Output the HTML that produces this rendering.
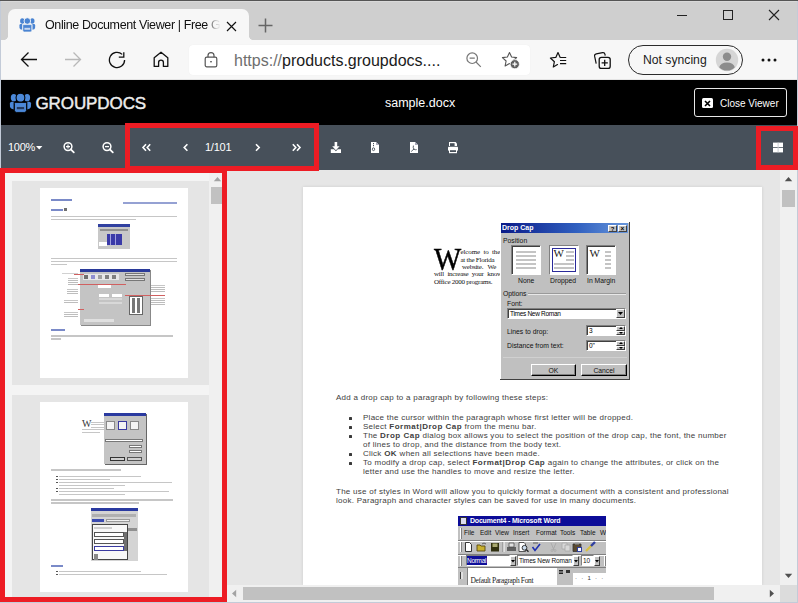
<!DOCTYPE html>
<html><head><meta charset="utf-8">
<style>
*{margin:0;padding:0;box-sizing:border-box}
html,body{width:798px;height:603px;overflow:hidden;background:#fff;font-family:"Liberation Sans",sans-serif}
.a{position:absolute}
#tabs{left:0;top:0;width:798px;height:40px;background:#cfcfcf}
#addr{left:0;top:40px;width:798px;height:40px;background:#f7f7f7}
#hdr{left:0;top:80px;width:798px;height:45px;background:#000}
#tb{left:0;top:125px;width:798px;height:45px;background:#47505a}
#content{left:0;top:170px;width:798px;height:433px;background:#e6e6e6}
#thumbs{left:0;top:170px;width:227px;height:433px;background:#f4f4f4}
.rb{position:absolute;border:5px solid #ed1c24}

.ser{font-family:"Liberation Serif",serif;font-size:7px;line-height:8px;color:#111;white-space:nowrap;letter-spacing:-0.25px}
.dlg{font-size:6.8px;line-height:9px;color:#111;white-space:nowrap}
.opt{width:30px;height:30px;background:#fff;border:1px solid;border-color:#808080 #fff #fff #808080;box-shadow:inset 1px 1px 0 #404040}
.ln{position:absolute;height:2px;background:#c4c4c4}
.inp{background:#fff;border:1px solid;border-color:#808080 #fff #fff #808080;box-shadow:inset 1px 1px 0 #404040}
.btn3{background:#c0c0c0;border:1px solid;border-color:#fff #404040 #404040 #fff}
.t{font-size:8px;line-height:9px;color:#404040;white-space:nowrap;letter-spacing:0.26px}
.t b{letter-spacing:0.5px}
.bul{width:3px;height:3px;background:#3a3a3a;border-radius:0.5px}

.tl{position:absolute}
.tl.b{background:#7a8ac8}
.tl.g{height:1.5px;background:#c6c6c6}
</style></head><body>
<div id="tabs" class="a"></div>
<div id="addr" class="a"></div>

<!-- window borders -->
<div class="a" style="left:0;top:0;width:798px;height:1px;background:#555"></div>
<div class="a" style="left:0;top:1px;width:798px;height:1px;background:#d9d9d9"></div>
<!-- active tab -->
<div class="a" style="left:8px;top:9px;width:241px;height:31px;background:#f7f7f7;border-radius:7px 7px 0 0"></div>
<div class="a" style="left:4px;top:36px;width:4px;height:4px;background:radial-gradient(circle at 0 0,#cfcfcf 3.6px,#f7f7f7 4.2px)"></div>
<div class="a" style="left:249px;top:36px;width:4px;height:4px;background:radial-gradient(circle at 100% 0,#cfcfcf 3.6px,#f7f7f7 4.2px)"></div>
<svg class="a" style="left:18px;top:16px" width="18" height="18" viewBox="0 0 18 18">
 <g fill="#4a84d2">
  <ellipse cx="4.3" cy="5" rx="2.2" ry="2.7"/>
  <ellipse cx="14.3" cy="5" rx="2.2" ry="2.7"/>
  <circle cx="9.3" cy="5" r="3.3" stroke="#f7f7f7" stroke-width="0.9"/>
  <path d="M1.4 9.4Q1.4 8 2.8 8L4.2 8L4.2 13.8Q1.8 13.4 1.5 12Z"/>
  <path d="M17.2 9.4Q17.2 8 15.8 8L14.4 8L14.4 13.8Q16.8 13.4 17.1 12Z"/>
  <path d="M4.8 9.2Q4.8 8.6 5.6 8.6L13 8.6Q13.8 8.6 13.8 9.2L13.8 14.4Q13.8 16 12.2 16L6.4 16Q4.8 16 4.8 14.4Z" stroke="#f7f7f7" stroke-width="0.7"/>
 </g>
 <rect x="6.4" y="11.8" width="5.8" height="2" fill="#c8d8f0"/>
</svg>
<div class="a" style="left:45px;top:16px;width:178px;height:18px;overflow:hidden;white-space:nowrap;font-size:12.5px;letter-spacing:-0.38px;line-height:18px;color:#111;-webkit-mask-image:linear-gradient(90deg,#000 162px,rgba(0,0,0,.25) 170px,transparent 176px)">Online Document Viewer | Free GroupDocs</div>
<svg class="a" style="left:226px;top:20.5px" width="11" height="11" viewBox="0 0 11 11"><path d="M1 1L10 10M10 1L1 10" stroke="#111" stroke-width="1.15"/></svg>
<svg class="a" style="left:258px;top:18px" width="15" height="15" viewBox="0 0 15 15"><path d="M7.5 0.5V14.5M0.5 7.5H14.5" stroke="#666" stroke-width="1.5"/></svg>
<!-- window controls -->
<div class="a" style="left:677px;top:15px;width:10px;height:1px;background:#222"></div>
<div class="a" style="left:723px;top:10px;width:10px;height:10px;border:1px solid #222"></div>
<svg class="a" style="left:768px;top:9px" width="12" height="12" viewBox="0 0 12 12"><path d="M1 1L11 11M11 1L1 11" stroke="#222" stroke-width="1.1"/></svg>
<!-- address row -->
<svg class="a" style="left:20px;top:51px" width="18" height="17" viewBox="0 0 18 17"><path d="M17 8.5H2M8.5 1.5L1.5 8.5L8.5 15.5" stroke="#111" stroke-width="1.3" fill="none"/></svg>
<svg class="a" style="left:64px;top:51px" width="18" height="17" viewBox="0 0 18 17"><path d="M1 8.5H16M9.5 1.5L16.5 8.5L9.5 15.5" stroke="#b8b8b8" stroke-width="1.3" fill="none"/></svg>
<svg class="a" style="left:108px;top:51px" width="18" height="18" viewBox="0 0 18 18"><path d="M16.6 9A7.6 7.6 0 1 1 14.2 3.4" stroke="#111" stroke-width="1.3" fill="none"/><path d="M15.8 1.2V6.2H10.8" stroke="#111" stroke-width="1.3" fill="none"/></svg>
<svg class="a" style="left:153px;top:51px" width="16" height="17" viewBox="0 0 16 17"><path d="M1.2 6.8L8 1.2L14.8 6.8V15.4H10.4V11.4Q10.4 9.2 8 9.2Q5.6 9.2 5.6 11.4V15.4H1.2Z" stroke="#111" stroke-width="1.3" fill="none" stroke-linejoin="round"/></svg>
<div class="a" style="left:189px;top:45px;width:341px;height:30px;background:#fff;border-radius:4px;box-shadow:0 0 1px rgba(0,0,0,.08)"></div>
<svg class="a" style="left:204px;top:51px" width="14" height="17" viewBox="0 0 14 17"><rect x="1.2" y="6.2" width="11.6" height="9.6" rx="1.6" stroke="#555" stroke-width="1.2" fill="none"/><path d="M4 6.2V4.6A3 3 0 0 1 10 4.6V6.2" stroke="#555" stroke-width="1.2" fill="none"/><rect x="6.2" y="10" width="1.6" height="1.4" fill="#555"/></svg>
<div class="a" style="left:234px;top:51px;font-size:16px;line-height:20px;white-space:nowrap;color:#1b1b1b"><span style="color:#6e6e6e">https://</span>products.groupdocs....</div>
<svg class="a" style="left:466px;top:52px" width="16" height="16" viewBox="0 0 16 16"><circle cx="6.2" cy="6.2" r="5.3" stroke="#777" stroke-width="1.2" fill="none"/><path d="M3.6 6.2H8.8M10 10L14.8 14.8" stroke="#777" stroke-width="1.2"/></svg>
<svg class="a" style="left:501px;top:51px" width="20" height="19" viewBox="0 0 20 19"><path d="M8.5 1.5L10.6 6L15.6 6.6L11.9 10L12.9 15L8.5 12.5L4.1 15L5.1 10L1.4 6.6L6.4 6Z" stroke="#555" stroke-width="1.1" fill="none" stroke-linejoin="round"/><circle cx="13.8" cy="13.2" r="4.6" fill="#5e5e5e" stroke="#fff" stroke-width="0.8"/><path d="M13.8 10.8V15.6M11.4 13.2H16.2" stroke="#fff" stroke-width="1.2"/></svg>
<svg class="a" style="left:549px;top:51px" width="19" height="18" viewBox="0 0 19 18"><path d="M11.2 6.4L9 1.5L6.8 6.4L1.4 7L5.4 10.7L4.3 16L8.5 13.6" stroke="#111" stroke-width="1.2" fill="none" stroke-linejoin="round" stroke-linecap="round"/><path d="M11.2 6.5H17.2M11 9.5H17.2M11 12.6H17.2" stroke="#111" stroke-width="1.2"/></svg>
<svg class="a" style="left:593px;top:51px" width="19" height="19" viewBox="0 0 19 19"><path d="M3.2 12.6L1.6 5.2Q1.3 3.2 3.3 2.8L9.6 1.6Q11.6 1.3 12 3.3L12.2 4.6" stroke="#111" stroke-width="1.2" fill="none"/><rect x="6.2" y="6.4" width="11" height="11" rx="2.2" stroke="#111" stroke-width="1.3" fill="#f7f7f7"/><path d="M11.7 8.8V15M8.6 11.9H14.8" stroke="#111" stroke-width="1.3"/></svg>
<div class="a" style="left:628px;top:45px;width:115px;height:30px;border:1.3px solid #2b2b2b;border-radius:15px"></div>
<div class="a" style="left:643px;top:51px;font-size:12.2px;line-height:18px;white-space:nowrap;color:#1b1b1b">Not syncing</div>
<svg class="a" style="left:715px;top:48px" width="24" height="24" viewBox="0 0 24 24"><circle cx="12" cy="12" r="11.2" fill="#d6d6d6"/><circle cx="12" cy="8.8" r="4.2" fill="#8c8c8c"/><path d="M4.2 19.2Q5.6 14.4 12 14.4Q18.4 14.4 19.8 19.2Q16.8 22.6 12 22.6Q7.2 22.6 4.2 19.2Z" fill="#8c8c8c"/></svg>
<svg class="a" style="left:761px;top:58px" width="16" height="4" viewBox="0 0 16 4"><circle cx="2" cy="2" r="1.5" fill="#111"/><circle cx="8" cy="2" r="1.5" fill="#111"/><circle cx="14" cy="2" r="1.5" fill="#111"/></svg>
<div class="a" style="left:0;top:79px;width:798px;height:1px;background:#e4e4e4"></div>
<div id="hdr" class="a"></div>
<div id="tb" class="a"></div>

<!-- header content -->
<svg class="a" style="left:8px;top:90.7px" width="25" height="24" viewBox="0 0 18.66 17.9">
 <g fill="#4b88d8">
  <ellipse cx="4.3" cy="5" rx="2.2" ry="2.7"/>
  <ellipse cx="14.3" cy="5" rx="2.2" ry="2.7"/>
  <circle cx="9.3" cy="5" r="3.3" stroke="#000" stroke-width="0.8"/>
  <path d="M1.4 9.4Q1.4 8 2.8 8L4.2 8L4.2 13.8Q1.8 13.4 1.5 12Z"/>
  <path d="M17.2 9.4Q17.2 8 15.8 8L14.4 8L14.4 13.8Q16.8 13.4 17.1 12Z"/>
  <path d="M4.8 9.2Q4.8 8.6 5.6 8.6L13 8.6Q13.8 8.6 13.8 9.2L13.8 14.4Q13.8 16 12.2 16L6.4 16Q4.8 16 4.8 14.4Z" stroke="#000" stroke-width="0.6"/>
 </g>
 <rect x="6.4" y="11.8" width="5.8" height="2" fill="#233a60" stroke="#6a9ad8" stroke-width="0.3"/>
</svg>
<div class="a" style="left:35.5px;top:94px;font-size:17px;line-height:20px;color:#ededed;white-space:nowrap;letter-spacing:-0.1px;-webkit-text-stroke:0.45px #ededed">GROUPDOCS</div>
<div class="a" style="left:385px;top:95px;font-size:12.5px;line-height:16px;color:#fff;white-space:nowrap">sample.docx</div>
<div class="a" style="left:694px;top:88px;width:93px;height:29px;border:1px solid #e8e8e8;border-radius:3px"></div>
<div class="a" style="left:702px;top:98px;width:11px;height:10px;background:#fff;border-radius:1.5px"></div>
<svg class="a" style="left:704px;top:99.5px" width="7" height="7" viewBox="0 0 7 7"><path d="M1 1L6 6M6 1L1 6" stroke="#000" stroke-width="1.6"/></svg>
<div class="a" style="left:720px;top:97px;font-size:10px;line-height:13px;color:#fff;white-space:nowrap">Close Viewer</div>

<!-- toolbar content -->
<div class="a" style="left:8px;top:140px;font-size:11px;line-height:14px;color:#fff;white-space:nowrap;letter-spacing:-0.3px">100%</div>
<svg class="a" style="left:36px;top:146px" width="7" height="4" viewBox="0 0 7 4"><path d="M0 0H6.4L3.2 3.4Z" fill="#fff"/></svg>
<svg class="a" style="left:62px;top:141px" width="14" height="14" viewBox="0 0 14 14"><circle cx="6" cy="5.6" r="3.9" stroke="#fff" stroke-width="1.5" fill="none"/><path d="M4 5.6H8M6 3.6V7.6" stroke="#fff" stroke-width="1.1"/><path d="M8.8 8.4L11.8 11.4" stroke="#fff" stroke-width="1.8" stroke-linecap="round"/></svg>
<svg class="a" style="left:101px;top:141px" width="14" height="14" viewBox="0 0 14 14"><circle cx="6" cy="5.6" r="3.9" stroke="#fff" stroke-width="1.5" fill="none"/><path d="M4 5.6H8" stroke="#fff" stroke-width="1.3"/><path d="M8.8 8.4L11.8 11.4" stroke="#fff" stroke-width="1.8" stroke-linecap="round"/></svg>
<svg class="a" style="left:141px;top:143px" width="11" height="9" viewBox="0 0 11 9"><path d="M5 1.2L2 4.5L5 7.8M9.2 1.2L6.2 4.5L9.2 7.8" stroke="#fff" stroke-width="1.6" fill="none"/></svg>
<svg class="a" style="left:182px;top:143px" width="8" height="9" viewBox="0 0 8 9"><path d="M5.4 1.2L2.2 4.5L5.4 7.8" stroke="#fff" stroke-width="1.6" fill="none"/></svg>
<div class="a" style="left:205px;top:140px;font-size:11px;line-height:14px;color:#fff;white-space:nowrap;letter-spacing:-0.25px">1/101</div>
<svg class="a" style="left:254px;top:143px" width="8" height="9" viewBox="0 0 8 9"><path d="M2 1.2L5.2 4.5L2 7.8" stroke="#fff" stroke-width="1.6" fill="none"/></svg>
<svg class="a" style="left:291px;top:143px" width="11" height="9" viewBox="0 0 11 9"><path d="M1.8 1.2L4.8 4.5L1.8 7.8M6 1.2L9 4.5L6 7.8" stroke="#fff" stroke-width="1.6" fill="none"/></svg>
<svg class="a" style="left:330px;top:141px" width="12" height="13" viewBox="0 0 12 13"><path d="M4.6 1H7.2V5.2H9.6L5.9 9.2L2.2 5.2H4.6Z" fill="#fff"/><path d="M0.8 8.2H4L5.9 10.2L7.8 8.2H11V12H0.8Z" fill="#fff"/></svg>
<svg class="a" style="left:370px;top:141px" width="10" height="13" viewBox="0 0 10 13"><path d="M1 1H6L9 4V12H1Z" fill="#fff"/><path d="M6 1V4H9" fill="#aab" /><rect x="3" y="2" width="1" height="1.2" fill="#47505a"/><rect x="3" y="4" width="1" height="1.2" fill="#47505a"/><ellipse cx="3.5" cy="8.2" rx="1.2" ry="1.4" fill="none" stroke="#47505a" stroke-width="0.9"/></svg>
<svg class="a" style="left:409px;top:141px" width="10" height="13" viewBox="0 0 10 13"><path d="M1 1H6L9 4V12H1Z" fill="#fff"/><path d="M6 1V4H9" fill="#aab"/><path d="M4.4 4.6Q3.8 7 5 8.2Q6.4 9 7.6 8.6M5 8.2Q3.2 9 2.4 10.6" stroke="#47505a" stroke-width="0.9" fill="none"/></svg>
<svg class="a" style="left:447px;top:141px" width="12" height="13" viewBox="0 0 12 13"><path d="M2 1H8.6L10 2.4V5H2Z" fill="#fff"/><rect x="3" y="2.2" width="4.6" height="2.8" fill="#47505a"/><rect x="1" y="5.8" width="10" height="4" rx="0.8" fill="#fff"/><rect x="2" y="9" width="8" height="3.2" fill="#fff"/><rect x="3" y="9.2" width="6" height="1.8" fill="#47505a"/></svg>
<svg class="a" style="left:772px;top:142px" width="12" height="12" viewBox="0 0 12 12"><rect x="1" y="0.6" width="10" height="4.6" fill="#fff"/><rect x="1" y="6" width="10" height="4.4" fill="#fff"/><rect x="5.6" y="0.6" width="1" height="9.8" fill="#c9cdd2"/></svg>
<div id="content" class="a"></div>
<div id="thumbs" class="a"></div>

<!-- main page content -->
<div id="pg" class="a" style="left:303px;top:187px;width:459px;height:398px;background:#fff;overflow:hidden;box-shadow:0 0 3px rgba(0,0,0,.12)">
 <!-- drop cap sample -->
  <div class="a" style="left:130.5px;top:56px;font-family:'Liberation Serif',serif;font-size:32px;line-height:32px;color:#000;-webkit-text-stroke:0.5px #000;transform:scaleX(0.9);transform-origin:0 0">W</div>
 <div class="a ser" style="left:157.5px;top:61px;letter-spacing:-0.1px">elcome&nbsp; to&nbsp; the</div>
 <div class="a ser" style="left:157.5px;top:68.5px">at the Florida</div>
 <div class="a ser" style="left:157.5px;top:75.5px">&nbsp;website.&nbsp;&nbsp; We</div>
 <div class="a ser" style="left:131px;top:83px;word-spacing:2px">will increase your knowledge</div>
 <div class="a ser" style="left:131px;top:91px">Office 2000 programs.</div>
<!-- dialog -->
 <div class="a" style="left:197px;top:35px;width:130px;height:158px;background:#c0c0c0;border-right:1px solid #404040;border-bottom:1px solid #404040;box-shadow:inset 1px 1px 0 #fff"></div>
 <div class="a" style="left:198px;top:36px;width:127px;height:10px;background:linear-gradient(90deg,#0a1a88,#3060c0 60%,#6a98dc)"></div>
 <div class="a dlg" style="left:199px;top:36px;color:#fff;font-weight:bold;font-size:7px;line-height:10px">Drop Cap</div>
 <div class="a" style="left:305px;top:37.5px;width:9px;height:7.5px;background:#c0c0c0;border:1px solid;border-color:#fff #404040 #404040 #fff;font-size:6px;line-height:6px;text-align:center;font-weight:bold;color:#000">?</div>
 <div class="a" style="left:315px;top:37.5px;width:9px;height:7.5px;background:#c0c0c0;border:1px solid;border-color:#fff #404040 #404040 #fff;font-size:6.5px;line-height:6px;text-align:center;font-weight:bold;color:#000">&#215;</div>
 <div class="a dlg" style="left:200px;top:49px">Position</div>
 <div class="a opt" style="left:208px;top:58px"><div class="ln" style="top:5px;left:4px;width:20px"></div><div class="ln" style="top:9px;left:4px;width:20px"></div><div class="ln" style="top:13px;left:4px;width:20px"></div><div class="ln" style="top:17px;left:4px;width:20px"></div><div class="ln" style="top:21px;left:4px;width:20px"></div></div>
 <div class="a opt" style="left:245.5px;top:58px;box-shadow:inset 0 0 0 2px #fff, inset 0 0 0 3px #2a2a9a"><div class="a" style="left:4px;top:2px;font-family:'Liberation Serif',serif;font-size:11px;line-height:11px;color:#222">W</div><div class="ln" style="top:5px;left:16px;width:8px"></div><div class="ln" style="top:9px;left:16px;width:8px"></div><div class="ln" style="top:13px;left:16px;width:8px"></div><div class="ln" style="top:17px;left:4px;width:20px"></div><div class="ln" style="top:21px;left:4px;width:20px"></div></div>
 <div class="a opt" style="left:282.5px;top:58px"><div class="a" style="left:3px;top:2px;font-family:'Liberation Serif',serif;font-size:11px;line-height:11px;color:#222">W</div><div class="ln" style="top:5px;left:18px;width:6px"></div><div class="ln" style="top:9px;left:18px;width:6px"></div><div class="ln" style="top:13px;left:18px;width:6px"></div><div class="ln" style="top:17px;left:18px;width:6px"></div><div class="ln" style="top:21px;left:18px;width:6px"></div></div>
 <div class="a dlg" style="left:215px;top:89px">None</div>
 <div class="a dlg" style="left:247px;top:89px">Dropped</div>
 <div class="a dlg" style="left:284px;top:89px">In Margin</div>
 <div class="a dlg" style="left:200px;top:102px">Options</div>
 <div class="a" style="left:225px;top:106px;width:98px;height:1px;background:#9a9a9a;box-shadow:0 1px 0 #e8e8e8"></div>
 <div class="a dlg" style="left:204px;top:112px">Font:</div>
 <div class="a inp" style="left:204px;top:121px;width:119px;height:11px"><span style="position:absolute;left:2px;top:0;font-size:6.5px;line-height:9px;letter-spacing:-0.3px">Times New Roman</span><div class="a btn3" style="right:0;top:0;width:9px;height:9px"></div><svg class="a" style="right:2px;top:3px" width="5" height="3"><path d="M0 0H5L2.5 3Z" fill="#000"/></svg></div>
 <div class="a dlg" style="left:204px;top:140px">Lines to drop:</div>
 <div class="a inp" style="left:283px;top:138px;width:40px;height:11px"><span style="position:absolute;left:2px;top:0;font-size:6.5px;line-height:9px">3</span><div class="a btn3" style="right:0;top:0;width:9px;height:4.5px"></div><div class="a btn3" style="right:0;top:4.5px;width:9px;height:4.5px"></div><svg class="a" style="right:2.5px;top:1px" width="4" height="2"><path d="M0 2H4L2 0Z" fill="#000"/></svg><svg class="a" style="right:2.5px;top:6px" width="4" height="2"><path d="M0 0H4L2 2Z" fill="#000"/></svg></div>
 <div class="a dlg" style="left:204px;top:154px">Distance from text:</div>
 <div class="a inp" style="left:283px;top:153px;width:40px;height:11px"><span style="position:absolute;left:2px;top:0;font-size:6.5px;line-height:9px">0"</span><div class="a btn3" style="right:0;top:0;width:9px;height:4.5px"></div><div class="a btn3" style="right:0;top:4.5px;width:9px;height:4.5px"></div><svg class="a" style="right:2.5px;top:1px" width="4" height="2"><path d="M0 2H4L2 0Z" fill="#000"/></svg><svg class="a" style="right:2.5px;top:6px" width="4" height="2"><path d="M0 0H4L2 2Z" fill="#000"/></svg></div>
 <div class="a" style="left:200px;top:170px;width:124px;height:1px;background:#d0d0d0"></div>
 <div class="a btn3" style="left:228px;top:176.5px;width:45px;height:12.5px;border-color:#fff #000 #000 #fff;box-shadow:inset -1px -1px 0 #808080"><span class="dlg" style="position:absolute;left:0;width:100%;text-align:center;top:1px">OK</span></div>
 <div class="a btn3" style="left:278px;top:176.5px;width:46px;height:12.5px;border-color:#fff #000 #000 #fff;box-shadow:inset -1px -1px 0 #808080"><span class="dlg" style="position:absolute;left:0;width:100%;text-align:center;top:1px">Cancel</span></div>

 <!-- text -->
 <div class="a t" style="left:33px;top:206px">Add a drop cap to a paragraph by following these steps:</div>
 <div class="a bul" style="left:46px;top:229.5px"></div>
 <div class="a t" style="left:60px;top:226px">Place the cursor within the paragraph whose first letter will be dropped.</div>
 <div class="a bul" style="left:46px;top:238.5px"></div>
 <div class="a t" style="left:60px;top:235px">Select <b>Format|Drop Cap</b> from the menu bar.</div>
 <div class="a bul" style="left:46px;top:247.5px"></div>
 <div class="a t" style="left:60px;top:244px">The <b>Drop Cap</b> dialog box allows you to select the position of the drop cap, the font, the number</div>
 <div class="a t" style="left:60px;top:253px">of lines to drop, and the distance from the body text.</div>
 <div class="a bul" style="left:46px;top:265.5px"></div>
 <div class="a t" style="left:60px;top:262px">Click <b>OK</b> when all selections have been made.</div>
 <div class="a bul" style="left:46px;top:274.5px"></div>
 <div class="a t" style="left:60px;top:271px">To modify a drop cap, select <b>Format|Drop Cap</b> again to change the attributes, or click on the</div>
 <div class="a t" style="left:60px;top:280px">letter and use the handles to move and resize the letter.</div>
 <div class="a t" style="left:33px;top:300px">The use of styles in Word will allow you to quickly format a document with a consistent and professional</div>
 <div class="a t" style="left:33px;top:309px">look. Paragraph and character styles can be saved for use in many documents.</div>

 <!-- word screenshot -->
 <div class="a" style="left:155px;top:328.5px;width:148px;height:75px;background:#c0c0c0;overflow:hidden">
  <div class="a" style="left:0;top:0;width:148px;height:10px;background:#0c0c98"></div>
  <div class="a" style="left:2px;top:1px;width:7px;height:8px;background:#dde;border:1px solid #333"></div>
  <div class="a" style="left:12px;top:0;color:#fff;font-weight:bold;font-size:7px;line-height:10px;white-space:nowrap;letter-spacing:-0.2px">Document4 - Microsoft Word</div>
  <div class="a" style="left:2px;top:12px;width:1px;height:11px;background:#fff;box-shadow:1px 0 0 #808080"></div>
  <div class="a dlg" style="left:6px;top:12.5px;font-size:6.5px;white-space:nowrap"><span style="position:absolute;left:0">File</span><span style="position:absolute;left:16px">Edit</span><span style="position:absolute;left:31px">View</span><span style="position:absolute;left:49px">Insert</span><span style="position:absolute;left:72px">Format</span><span style="position:absolute;left:96px">Tools</span><span style="position:absolute;left:116px">Table</span><span style="position:absolute;left:136px">W</span></div>
  <div class="a" style="left:0;top:24px;width:148px;height:1px;background:#808080;box-shadow:0 1px 0 #fff"></div>
  <div class="a" style="left:2px;top:26.5px;width:1px;height:10px;background:#fff;box-shadow:1px 0 0 #808080"></div>
  <svg class="a" style="left:6px;top:25.5px" width="142" height="12" viewBox="0 0 142 12">
   <path d="M1.5 1.5H5.5L7.5 3.5V10.5H1.5Z" fill="#fff" stroke="#222" stroke-width="0.9"/>
   <path d="M13 4H16L17 5H21V10H13Z" fill="#c8b030" stroke="#5a4a10" stroke-width="0.9"/><path d="M18 3Q20 1 22 3" stroke="#444" fill="none" stroke-width="0.8"/>
   <rect x="27" y="2" width="8" height="8.5" fill="#303010"/><rect x="28.5" y="2.5" width="5" height="3.5" fill="#a8a870"/>
   <rect x="38.5" y="1" width="1" height="10" fill="#808080"/><rect x="39.5" y="1" width="1" height="10" fill="#fff"/>
   <path d="M43 6H52V10H43Z" fill="#606060"/><path d="M45 2H50V6H45Z" fill="#e0e0e0" stroke="#444" stroke-width="0.7"/>
   <path d="M55 1.5H60L61.5 3V10.5H55Z" fill="#fff" stroke="#333" stroke-width="0.8"/><circle cx="60.5" cy="6.8" r="2.4" fill="#cde" stroke="#222" stroke-width="0.9"/><path d="M62.2 8.5L64.5 10.8" stroke="#222" stroke-width="1.3"/>
   <path d="M69 2H74" stroke="#444" stroke-width="0.8"/><path d="M68.5 6L71 9.5L76 3" stroke="#2030b0" stroke-width="1.6" fill="none"/>
   <path d="M87 2L90 9M92 2L89 9" stroke="#a8a8a8" stroke-width="0.9"/><circle cx="88" cy="9.5" r="1" fill="none" stroke="#a8a8a8" stroke-width="0.7"/><circle cx="91" cy="9.5" r="1" fill="none" stroke="#a8a8a8" stroke-width="0.7"/>
   <path d="M98 2H103V8H98Z" fill="#d8d8d8" stroke="#a8a8a8" stroke-width="0.8"/><path d="M101 4H106V10H101Z" fill="#d8d8d8" stroke="#a8a8a8" stroke-width="0.8"/>
   <path d="M109 3H117V10.5H109Z" fill="#5a4a30" stroke="#333" stroke-width="0.8"/><rect x="111" y="1.5" width="4" height="2" fill="#999"/><rect x="113" y="6" width="5" height="5" fill="#3040a0"/><rect x="114" y="7" width="3" height="3" fill="#fff"/>
   <path d="M122 10L128 4" stroke="#d8c040" stroke-width="2.2"/><path d="M127 5L131 1" stroke="#3040a0" stroke-width="2.4"/>
  </svg>
  <div class="a" style="left:0;top:38px;width:148px;height:1px;background:#808080;box-shadow:0 1px 0 #fff"></div>
  <div class="a" style="left:2px;top:40px;width:1px;height:10px;background:#fff;box-shadow:1px 0 0 #808080"></div>
  <div class="a" style="left:7.5px;top:39.5px;width:44px;height:11px;background:#fff;border:1px solid;border-color:#808080 #fff #fff #808080"></div>
  <div class="a" style="left:8.5px;top:40.5px;width:20px;height:9px;background:#10109a"></div>
  <div class="a" style="left:9px;top:40px;color:#fff;font-size:6.5px;line-height:10px;letter-spacing:-0.3px">Normal</div>
  <div class="a btn3" style="left:51.5px;top:40px;width:6px;height:10px"></div>
  <svg class="a" style="left:52.5px;top:44px" width="4" height="3"><path d="M0 0H4L2 2.5Z" fill="#000"/></svg>
  <div class="a" style="left:59px;top:39.5px;width:56px;height:11px;background:#fff;border:1px solid;border-color:#808080 #fff #fff #808080"></div>
  <div class="a" style="left:61px;top:40px;font-size:6.5px;line-height:10px;white-space:nowrap;color:#111;letter-spacing:-0.15px">Times New Roman</div>
  <div class="a btn3" style="left:115px;top:40px;width:6px;height:10px"></div>
  <svg class="a" style="left:116px;top:44px" width="4" height="3"><path d="M0 0H4L2 2.5Z" fill="#000"/></svg>
  <div class="a" style="left:123px;top:39.5px;width:13px;height:11px;background:#fff;border:1px solid;border-color:#808080 #fff #fff #808080"></div>
  <div class="a" style="left:125px;top:40px;font-size:6.5px;line-height:10px;color:#111">10</div>
  <div class="a btn3" style="left:136px;top:40px;width:6px;height:10px"></div>
  <svg class="a" style="left:137px;top:44px" width="4" height="3"><path d="M0 0H4L2 2.5Z" fill="#000"/></svg>
  <div class="a" style="left:146px;top:40px;width:1px;height:10px;background:#fff;box-shadow:1px 0 0 #808080"></div>
  <div class="a" style="left:0;top:51px;width:148px;height:1px;background:#808080"></div>
  <div class="a" style="left:0;top:52px;width:148px;height:30px;background:#c0c0c0"></div>
  <div class="a" style="left:1.5px;top:56px;width:3px;height:7px;background:#e0e0e0;border-left:1px solid #404040"></div>
  <div class="a" style="left:9px;top:51.5px;width:90px;height:30px;background:#fff;border-left:1px solid #808080;border-top:1px solid #808080"></div>
  <div class="a" style="left:12.5px;top:60px;font-family:'Liberation Serif',serif;font-size:7.5px;line-height:9px;white-space:nowrap;color:#222;letter-spacing:-0.35px">Default Paragraph Font</div>
  <div class="a" style="left:99px;top:52px;width:15px;height:30px;background:#c0c0c0"></div>
  <div class="a" style="left:100.5px;top:54px;width:4px;height:1px;background:#222;box-shadow:0 1.5px 0 #222,0 3px 0 #222"></div>
  <div class="a" style="left:108px;top:54.5px;width:3.5px;height:3px;background:#333"></div>
  <div class="a" style="left:115px;top:57.5px;width:33px;height:12px;background:#fff"></div>
  <div class="a" style="left:117px;top:58px;font-size:6px;line-height:9px;white-space:nowrap;color:#333;letter-spacing:0.3px">· &nbsp;· &nbsp;1 &nbsp;· &nbsp;·</div>
 </div>
</div>

<!-- thumbnail cards -->
<div class="a" style="left:12px;top:181px;width:197px;height:204px;background:#e5e5e5"></div>
<div class="a" style="left:40px;top:188px;width:148px;height:190px;background:#fff"></div>
<div class="a" style="left:12px;top:395px;width:197px;height:204px;background:#e5e5e5"></div>
<div class="a" style="left:40px;top:402px;width:148px;height:190px;background:#fff"></div>


<!-- thumbnail 1 content -->
<div class="a" style="left:40px;top:188px;width:148px;height:190px;overflow:hidden">
 <div class="tl b" style="left:11px;top:11px;width:21px;height:2px"></div>
 <div class="tl b" style="left:83px;top:14px;width:54px;height:1.6px;opacity:.8"></div>
 <div class="tl b" style="left:11px;top:21px;width:12px;height:2px"></div>
 <div class="tl" style="left:24px;top:19.5px;width:3px;height:3px;background:#707070"></div>
 <div class="tl g" style="left:11px;top:27.5px;width:126px"></div>
 <div class="tl g" style="left:11px;top:30.5px;width:85px"></div>
 <div class="tl" style="left:58px;top:35.5px;width:32px;height:25px;background:#c8c8c8"></div>
 <div class="tl" style="left:58px;top:35.5px;width:32px;height:3px;background:#3040a0"></div>
 <div class="tl" style="left:60px;top:41px;width:28px;height:2px;background:#909090"></div>
 <div class="tl" style="left:67px;top:46px;width:15px;height:11px;background:#3a3aa8"></div>
 <div class="tl" style="left:70px;top:46px;width:1px;height:11px;background:#a0a0e0"></div>
 <div class="tl" style="left:75px;top:46px;width:1px;height:11px;background:#a0a0e0"></div>
 <div class="tl" style="left:59px;top:54px;width:8px;height:4px;background:#fff"></div>
 <div class="tl g" style="left:11px;top:69.5px;width:126px"></div>
 <div class="tl g" style="left:11px;top:72.5px;width:126px"></div>
 <div class="tl g" style="left:11px;top:75.5px;width:16px"></div>
 <div class="tl" style="left:39.5px;top:81px;width:70px;height:56px;background:#c4c4c4;box-shadow:1px 1px 0 #888"></div>
 <div class="tl" style="left:39.5px;top:81px;width:70px;height:2.5px;background:#2a3a9a"></div>
 <div class="tl" style="left:43px;top:86px;width:36px;height:6px;background:#e8e8e8"></div>
 <div class="tl" style="left:44px;top:87px;width:4px;height:4px;background:#707070"></div>
 <div class="tl" style="left:51px;top:87px;width:4px;height:4px;background:#9090d0"></div>
 <div class="tl" style="left:58px;top:87px;width:4px;height:4px;background:#a0a0a0"></div>
 <div class="tl" style="left:65px;top:87px;width:4px;height:4px;background:#808080"></div>
 <div class="tl" style="left:72px;top:87px;width:4px;height:4px;background:#808080"></div>
 <div class="tl" style="left:85px;top:85px;width:20px;height:3px;background:#e0e0e0;border:0.5px solid #777"></div>
 <div class="tl" style="left:85px;top:90px;width:20px;height:3px;background:#e0e0e0;border:0.5px solid #777"></div>
 <div class="tl" style="left:58px;top:97px;width:13px;height:3px;background:#fff"></div>
 <div class="tl" style="left:59px;top:106px;width:10px;height:3px;background:#fff"></div>
 <div class="tl" style="left:72px;top:106px;width:10px;height:3px;background:#fff"></div>
 <div class="tl" style="left:89px;top:108px;width:14px;height:19px;background:#fff;border:0.5px solid #666"></div>
 <div class="tl" style="left:92px;top:110px;width:3px;height:15px;background:#777"></div>
 <div class="tl" style="left:97px;top:110px;width:3px;height:15px;background:#777"></div>
 <div class="tl" style="left:59px;top:110px;width:23px;height:2px;background:#d8d8d8"></div>
 <div class="tl" style="left:59px;top:114px;width:23px;height:2px;background:#d8d8d8"></div>
 <div class="tl" style="left:44px;top:131px;width:30px;height:3px;background:#e0e0e0"></div>
 <div class="tl g" style="left:22px;top:84.5px;width:16px;opacity:.8"></div>
 <div class="tl g" style="left:28px;top:90px;width:10px;height:1px;box-shadow:0 2px 0 #bdbdbd,0 4px 0 #bdbdbd,0 6px 0 #bdbdbd"></div>
 <div class="tl g" style="left:27px;top:101px;width:11px;height:1px;box-shadow:0 2px 0 #bdbdbd,0 4px 0 #bdbdbd"></div>
 <div class="tl g" style="left:24px;top:112px;width:14px;height:1px;box-shadow:0 2px 0 #bdbdbd"></div>
 <div class="tl g" style="left:24px;top:124px;width:14px;height:1px;box-shadow:0 2px 0 #bdbdbd,0 4px 0 #bdbdbd"></div>
 <div class="tl g" style="left:111px;top:97px;width:14px;height:1px;box-shadow:0 2px 0 #bdbdbd,0 4px 0 #bdbdbd,0 6px 0 #bdbdbd"></div>
 <div class="tl g" style="left:111px;top:110px;width:14px;height:1px;box-shadow:0 2px 0 #bdbdbd,0 4px 0 #bdbdbd,0 6px 0 #bdbdbd"></div>
 <div class="tl" style="left:34px;top:85.5px;width:10px;height:0.6px;background:#d06060"></div>
 <div class="tl" style="left:38px;top:96px;width:48px;height:0.6px;background:#d06060"></div>
 <div class="tl" style="left:38px;top:121px;width:6px;height:0.6px;background:#d06060"></div>
 <div class="tl" style="left:85px;top:107px;width:40px;height:0.6px;background:#d06060"></div>
 <div class="tl b" style="left:11px;top:141px;width:14px;height:2px"></div>
 <div class="tl g" style="left:11px;top:147px;width:122px"></div>
 <div class="tl g" style="left:11px;top:150px;width:10px"></div>
</div>
<!-- thumbnail 2 content -->
<div class="a" style="left:40px;top:402px;width:148px;height:190px;overflow:hidden">
 <div class="tl" style="left:42px;top:17px;font-family:'Liberation Serif',serif;font-size:10px;line-height:10px;color:#333">W</div>
 <div class="tl g" style="left:51px;top:19.5px;width:13px;height:1px"></div>
 <div class="tl g" style="left:51px;top:22px;width:13px;height:1px"></div>
 <div class="tl g" style="left:51px;top:24.5px;width:13px;height:1px"></div>
 <div class="tl g" style="left:42px;top:27px;width:22px;height:1px"></div>
 <div class="tl g" style="left:42px;top:29.5px;width:18px;height:1px"></div>
 <div class="tl" style="left:63.6px;top:11px;width:42px;height:51px;background:#c4c4c4;box-shadow:1px 1px 0 #666"></div>
 <div class="tl" style="left:63.6px;top:11px;width:42px;height:3px;background:#2a3aa0"></div>
 <div class="tl" style="left:66px;top:19px;width:9px;height:9px;background:#f4f4f4;border:0.5px solid #888"></div>
 <div class="tl" style="left:78px;top:19px;width:9px;height:9px;background:#f4f4f4;border:1px solid #3a3aa0"></div>
 <div class="tl" style="left:90px;top:19px;width:9px;height:9px;background:#f4f4f4;border:0.5px solid #888"></div>
 <div class="tl" style="left:65px;top:37px;width:38px;height:3px;background:#fff;border:0.5px solid #777"></div>
 <div class="tl" style="left:89px;top:43px;width:13px;height:3px;background:#fff;border:0.5px solid #777"></div>
 <div class="tl" style="left:89px;top:48px;width:13px;height:3px;background:#fff;border:0.5px solid #777"></div>
 <div class="tl" style="left:70px;top:55px;width:15px;height:4px;background:#d0d0d0;border:0.5px solid #333"></div>
 <div class="tl" style="left:87px;top:55px;width:15px;height:4px;background:#d0d0d0;border:0.5px solid #555"></div>
 <div class="tl g" style="left:11px;top:67px;width:70px"></div>
 <div class="tl" style="left:16px;top:73.5px;width:1.5px;height:1.5px;background:#555"></div>
 <div class="tl g" style="left:19px;top:73.5px;width:82px"></div>
 <div class="tl" style="left:16px;top:76.5px;width:1.5px;height:1.5px;background:#555"></div>
 <div class="tl g" style="left:19px;top:76.5px;width:51px"></div>
 <div class="tl" style="left:16px;top:79.5px;width:1.5px;height:1.5px;background:#555"></div>
 <div class="tl g" style="left:19px;top:79.5px;width:113px"></div>
 <div class="tl g" style="left:19px;top:82.5px;width:66px"></div>
 <div class="tl" style="left:16px;top:85.5px;width:1.5px;height:1.5px;background:#555"></div>
 <div class="tl g" style="left:19px;top:85.5px;width:55px"></div>
 <div class="tl" style="left:16px;top:88.5px;width:1.5px;height:1.5px;background:#555"></div>
 <div class="tl g" style="left:19px;top:88.5px;width:110px"></div>
 <div class="tl g" style="left:19px;top:91.5px;width:66px"></div>
 <div class="tl g" style="left:11px;top:97px;width:122px"></div>
 <div class="tl g" style="left:11px;top:100px;width:88px"></div>
 <div class="tl" style="left:50.7px;top:106px;width:47px;height:53px;background:#d4d4d4"></div>
 <div class="tl" style="left:50.7px;top:106px;width:47px;height:3px;background:#2a3aa0"></div>
 <div class="tl" style="left:52px;top:112px;width:44px;height:3px;background:#b0b0b0"></div>
 <div class="tl" style="left:52px;top:117px;width:12px;height:3px;background:#3a4ab0"></div>
 <div class="tl" style="left:66px;top:117px;width:24px;height:3px;background:#f0f0f0;border:0.5px solid #999"></div>
 <div class="tl" style="left:52px;top:122px;width:36px;height:36px;background:#f8f8f8;border:0.5px solid #444"></div>
 <div class="tl g" style="left:54px;top:125px;width:18px;opacity:.8"></div>
 <div class="tl" style="left:54px;top:130px;width:30px;height:5px;background:#fff;border:0.5px solid #555"></div>
 <div class="tl" style="left:54px;top:137px;width:30px;height:5px;background:#fff;border:0.5px solid #555"></div>
 <div class="tl" style="left:54px;top:144px;width:30px;height:5px;background:#fff;border:0.7px solid #3a3aa0"></div>
 <div class="tl" style="left:84px;top:130px;width:3px;height:19px;background:#707070"></div>
 <div class="tl" style="left:88px;top:126px;width:9px;height:3px;background:#909090"></div>
 <div class="tl" style="left:54px;top:152px;width:4px;height:6px;background:#888"></div>
 <div class="tl b" style="left:11px;top:163px;width:12px;height:2px"></div>
 <div class="tl" style="left:16px;top:168.5px;width:1.5px;height:1.5px;background:#555"></div>
 <div class="tl g" style="left:19px;top:168.5px;width:82px"></div>
 <div class="tl" style="left:16px;top:171.5px;width:1.5px;height:1.5px;background:#555"></div>
 <div class="tl g" style="left:19px;top:171.5px;width:108px"></div>
</div>
<!-- main scrollbars -->
<div class="a" style="left:780px;top:170px;width:17px;height:415px;background:#f0f0f0"></div>
<svg class="a" style="left:784px;top:176px" width="9" height="6" viewBox="0 0 9 6"><path d="M0.8 5.2H8.2L4.5 1Z" fill="#505050"/></svg>
<div class="a" style="left:782px;top:190px;width:13px;height:17px;background:#c1c1c1"></div>
<svg class="a" style="left:784px;top:573px" width="9" height="6" viewBox="0 0 9 6"><path d="M0.8 0.8H8.2L4.5 5Z" fill="#505050"/></svg>
<div class="a" style="left:227px;top:585px;width:553px;height:17px;background:#f0f0f0"></div>
<svg class="a" style="left:231px;top:589px" width="6" height="9" viewBox="0 0 6 9"><path d="M5.2 0.8V8.2L1 4.5Z" fill="#a3a3a3"/></svg>
<div class="a" style="left:243px;top:587px;width:471px;height:13px;background:#c1c1c1"></div>
<svg class="a" style="left:769px;top:589px" width="6" height="9" viewBox="0 0 6 9"><path d="M0.8 0.8V8.2L5 4.5Z" fill="#505050"/></svg>
<div class="a" style="left:780px;top:585px;width:17px;height:17px;background:#dcdcdc"></div>
<!-- thumbnail scrollbar -->
<div class="a" style="left:209px;top:170px;width:17px;height:432px;background:#f0f0f0"></div>
<svg class="a" style="left:213px;top:176px" width="9" height="6" viewBox="0 0 9 6"><path d="M0.8 5.2H8.2L4.5 1Z" fill="#a3a3a3"/></svg>
<div class="a" style="left:211px;top:187px;width:13px;height:17px;background:#c1c1c1"></div>

<div class="a" style="left:0;top:1px;width:1px;height:602px;background:#c3cbd8"></div>
<div class="a" style="left:797px;top:1px;width:1px;height:602px;background:#c3cbd8"></div>
<div class="a" style="left:0;top:602px;width:798px;height:1px;background:#c3cbd8"></div>
<!-- red boxes -->
<div class="rb" style="left:0;top:168px;width:227px;height:434px"></div>
<div class="rb" style="left:125px;top:123px;width:194px;height:48px"></div>
<div class="rb" style="left:756px;top:126px;width:42px;height:44px"></div>
</body></html>
